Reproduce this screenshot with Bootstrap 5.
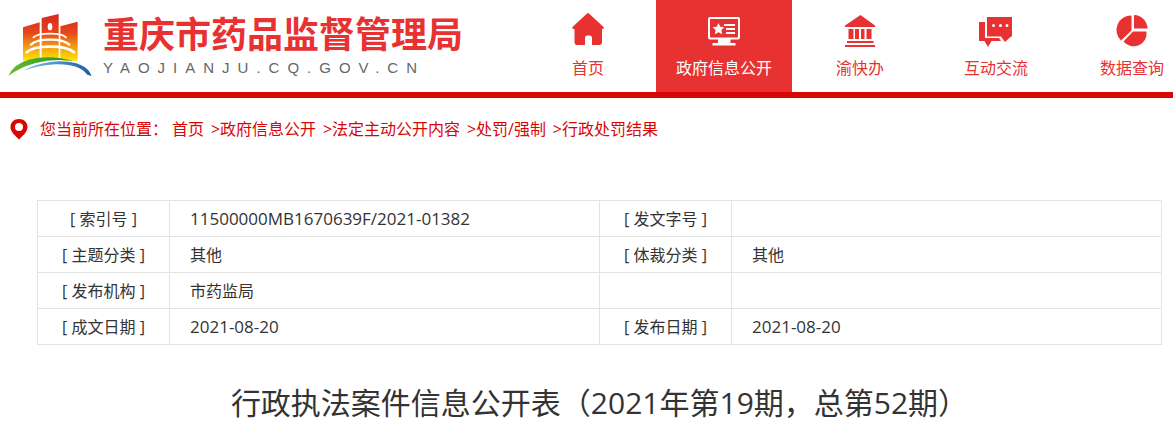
<!DOCTYPE html>
<html lang="zh-CN">
<head>
<meta charset="utf-8">
<meta name="viewport" content="width=device-width, initial-scale=1">
<title>重庆市药品监督管理局</title>
<link href="https://cdn.jsdelivr.net/npm/bootstrap@5.3.0/dist/css/bootstrap.min.css" rel="stylesheet">
<style>
  body { font-family: "Open Sans", "Noto Sans CJK SC", sans-serif; font-size: 16px; line-height: 24px; color: #333; background: #fff; overflow-x: hidden; }
  .site-header { border-bottom: 6px solid #d90606; overflow: hidden; }
  .header-inner { min-width: 1200px; height: 92px; }
  .site-logo { margin-top: 13px; }
  .site-title { padding: 10px 0 0 11px; }
  .site-name { font-size: 36px; line-height: 50px; font-weight: 700; color: #e83232; }
  .site-domain { font-family: "Liberation Sans", sans-serif; font-size: 15px; line-height: 16px; letter-spacing: 8px; color: #666; }
  .site-menu .nav-link { width: 136px; height: 92px; padding: 10px 0 0; color: #e83232; }
  .site-menu .nav-link.active { background: #e83232; color: #fff; }
  .site-menu svg { display: block; width: 40px; height: 40px; margin: 0 auto 6px; }
  .crumbs { color: #d90606; padding: 19px 10px 0; }
  .crumbs a { color: inherit; text-decoration: none; }
  .crumb-sep { width: 16px; text-align: right; }
  .article { padding: 59px 11px 0 37px; }
  .info-table { table-layout: fixed; border-color: #e3e3e3; margin-bottom: 39px; }
  .info-table > tbody > tr > * { height: 36px; padding: 5px 20px; color: #333; line-height: 24px; }
  .info-table > tbody > tr > th { padding: 5px 0; font-weight: 400; text-align: center; }
  .label-col { width: 132px; }
  .num { display: block; font-size: 17px; }
  .article-title { font-size: 30px; line-height: 38px; font-weight: 400; text-align: center; }
</style>
</head>
<body>
<header class="site-header">
  <div class="header-inner d-flex justify-content-between">
    <a href="#" class="d-flex text-decoration-none ps-2">
      <svg class="site-logo flex-shrink-0" width="84" height="64" viewBox="24 39 252 192" aria-hidden="true">
        <defs>
          <linearGradient id="tower" gradientUnits="userSpaceOnUse" x1="0" y1="42" x2="0" y2="182">
            <stop offset="0" stop-color="#d6281c"/><stop offset=".4" stop-color="#e5461b"/><stop offset=".7" stop-color="#f49a12"/><stop offset="1" stop-color="#ffe600"/>
          </linearGradient>
          <linearGradient id="hill"><stop offset="0" stop-color="#6fba2c"/><stop offset="1" stop-color="#14902f"/></linearGradient>
          <linearGradient id="river"><stop offset="0" stop-color="#7fc4ee"/><stop offset="1" stop-color="#1c5ba6"/></linearGradient>
        </defs>
        <path fill="url(#tower)" d="M69 82 119 67V182H69ZM125 54 176 42V182H125ZM181 79 233 65V182H181Z"/>
        <ellipse cx="150" cy="80" rx="7" ry="11" fill="#fff"/>
        <path fill="none" stroke="#fff" stroke-width="5" stroke-linecap="round" d="M100 112Q112 101 150 101T198 112"/>
        <path fill="none" stroke="#fff" stroke-width="7" stroke-linecap="round" d="M93 134Q108 119 150 119T208 134"/>
        <path fill="none" stroke="#fff" stroke-width="8" stroke-linecap="round" d="M80 157Q98 140 150 140T222 157"/>
        <path fill="#fff" d="M60 195Q150 160 240 195V206H60Z"/>
        <path fill="url(#hill)" d="M25 228Q40 192 86 179Q152 163 222 184Q164 174 104 190Q60 202 25 228Z"/>
        <path fill="url(#river)" d="M68 212Q124 185 178 184Q258 184 275 228L262 224Q235 190 165 193Q120 196 68 212Z"/>
      </svg>
      <span class="site-title d-flex flex-column">
        <span class="site-name">重庆市药品监督管理局</span>
        <span class="site-domain">YAOJIANJU.CQ.GOV.CN</span>
      </span>
    </a>
    <nav class="site-menu nav flex-nowrap text-center">
      <a class="nav-link" href="#"><svg viewBox="0 0 40 40" fill="currentColor" aria-hidden="true"><path d="M20 3Q20.500 3 21.500 4L35.500 17Q36.500 19 34 19V32Q34 35 31 35H24V28Q24 25.500 22 25.500H19Q17 25.500 17 28V35H9Q6.500 35 6.500 32V19Q3.500 19 4.500 17L18.500 4Q19.500 3 20 3Z"/></svg>首页</a>
      <a class="nav-link active" href="#"><svg viewBox="0 0 40 40" fill="currentColor" aria-hidden="true"><path fill-rule="evenodd" d="M6 7H34Q36 7 36 9V27Q36 29.500 34 29.500H26.500V33H31.500V35.500H8.500V33H14V29.500H6Q4 29.500 4 27V9Q4 7 6 7ZM6 9V27.500H34V9Z"/><path d="M14.500 13 16.300 16.800 20.400 17.300 17.400 20.100 18.200 24.200 14.500 22.200 10.800 24.200 11.600 20.100 8.600 17.300 12.700 16.800ZM20 14H31V16H20ZM22 18H31V20H22ZM22 22H31V24H22Z"/></svg>政府信息公开</a>
      <a class="nav-link" href="#"><svg viewBox="0 0 40 40" fill="currentColor" aria-hidden="true"><path d="M20.500 5 35 15.500V17H5V15.500ZM8.500 19H13.500V29H8.500ZM15 19H19V29H15ZM21 19H24.500V29H21ZM26.500 19H31.500V29H26.500ZM7 31H33.500V33H7ZM5 35H35V37H5Z"/></svg>渝快办</a>
      <a class="nav-link" href="#"><svg viewBox="0 0 40 40" fill="currentColor" aria-hidden="true"><path fill-rule="evenodd" d="M11 7H36V26.500H35L29 32 25 26.500H11ZM17.500 14A1.500 1.500 0 1 0 17.500 17A1.500 1.500 0 1 0 17.500 14ZM24.500 14A1.500 1.500 0 1 0 24.500 17A1.500 1.500 0 1 0 24.500 14ZM31 14A1.500 1.500 0 1 0 31 17A1.500 1.500 0 1 0 31 14Z"/><path d="M3 12H9V28H23L25 31H15.500L12 37 8.500 31H3Z"/></svg>互动交流</a>
      <a class="nav-link" href="#"><svg viewBox="0 0 40 40" fill="currentColor" aria-hidden="true"><path d="M19.500 5.500V20.500L9 30.500A14.500 14.500 0 0 1 19.500 5.500ZM22 5A14 14 0 0 1 35.500 18.500H22ZM21 21.500H34.500A13 13 0 0 1 11.500 31.500Z"/></svg>数据查询</a>
    </nav>
  </div>
</header>

<main>
  <nav class="crumbs d-flex align-items-center" aria-label="您当前所在位置">
    <svg class="me-2 flex-shrink-0" width="18" height="22" viewBox="0 0 18 22" aria-hidden="true"><path fill="#d90606" fill-rule="evenodd" d="M9 1C4 1 .5 4.500 .5 9C.5 14 5 17.500 9 21.500C13 17.500 17.500 14 17.500 9C17.500 4.500 14 1 9 1ZM9 5A4 4 0 1 1 9 13A4 4 0 1 1 9 5Z"/></svg>
    <span class="ms-1 me-1">您当前所在位置：</span>
    <a href="#">首页</a><span class="crumb-sep">&gt;</span>
    <a href="#">政府信息公开</a><span class="crumb-sep">&gt;</span>
    <a href="#">法定主动公开内容</a><span class="crumb-sep">&gt;</span>
    <a href="#">处罚/强制</a><span class="crumb-sep">&gt;</span>
    <a href="#">行政处罚结果</a>
  </nav>

  <article class="article">
    <table class="table table-bordered info-table align-middle">
      <colgroup><col class="label-col"><col><col class="label-col"><col></colgroup>
      <tbody>
        <tr><th scope="row">[ 索引号 ]</th><td><span class="num">11500000MB1670639F/2021-01382</span></td><th scope="row">[ 发文字号 ]</th><td></td></tr>
        <tr><th scope="row">[ 主题分类 ]</th><td>其他</td><th scope="row">[ 体裁分类 ]</th><td>其他</td></tr>
        <tr><th scope="row">[ 发布机构 ]</th><td>市药监局</td><td></td><td></td></tr>
        <tr><th scope="row">[ 成文日期 ]</th><td><span class="num">2021-08-20</span></td><th scope="row">[ 发布日期 ]</th><td><span class="num">2021-08-20</span></td></tr>
      </tbody>
    </table>
    <h1 class="article-title">行政执法案件信息公开表（2021年第19期，总第52期）</h1>
  </article>
</main>
<script src="https://cdn.jsdelivr.net/npm/bootstrap@5.3.0/dist/js/bootstrap.bundle.min.js"></script>
</body>
</html>
